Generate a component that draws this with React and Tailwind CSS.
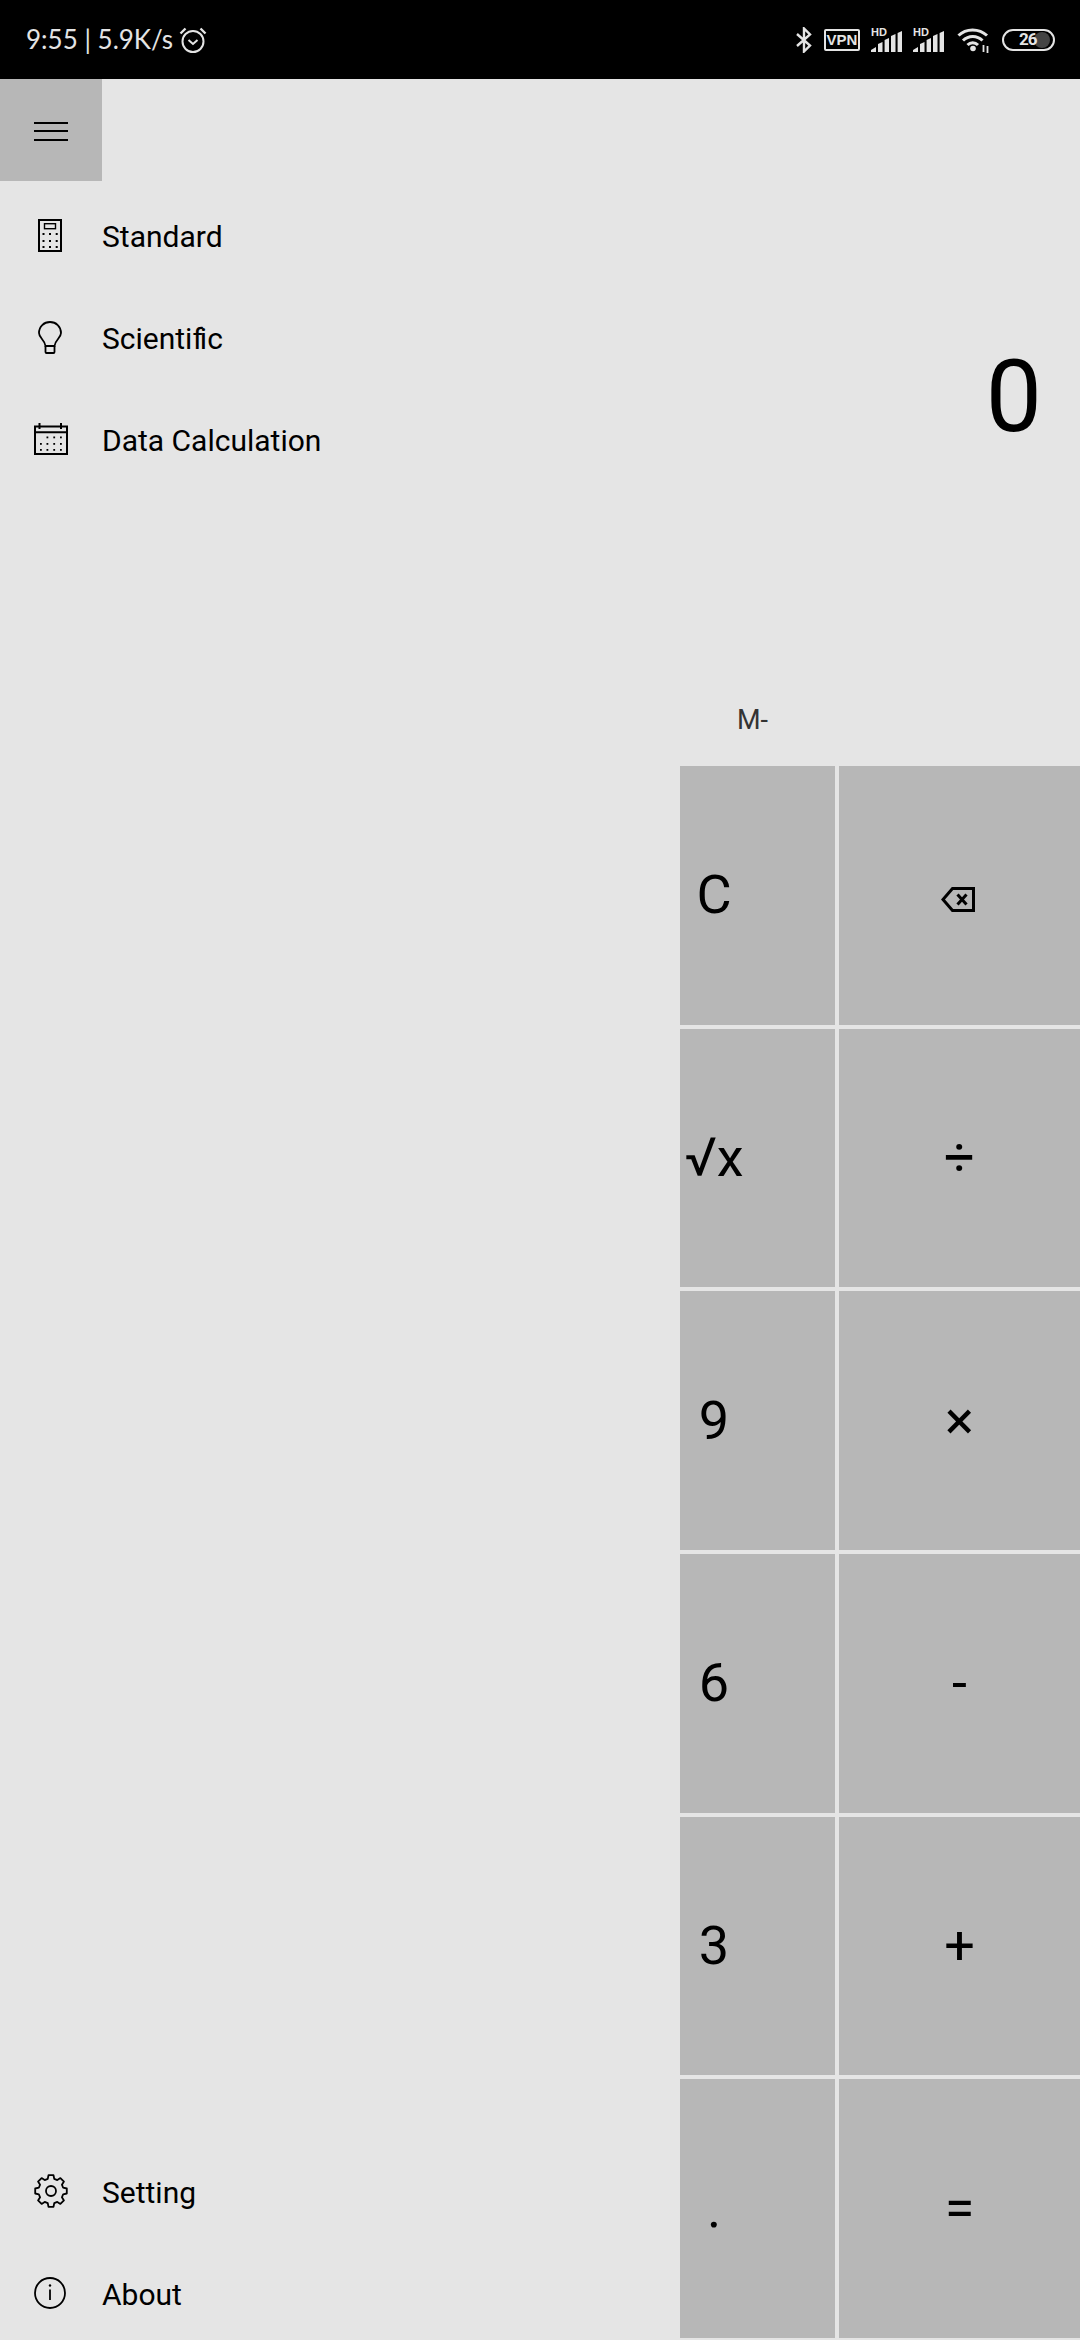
function gearPath() {
  const pts = [];
  const cx = 17;
  const cy = 17;
  for (let i = 0; i < 8; i++) {
    const a = -90 + i * 45;
    const list = [[a - 15, 12.6], [a - 9, 16], [a + 9, 16], [a + 15, 12.6]];
    for (const [deg, r] of list) {
      const t = (deg * Math.PI) / 180;
      pts.push(`${(cx + r * Math.cos(t)).toFixed(2)} ${(cy + r * Math.sin(t)).toFixed(2)}`);
    }
  }
  return `M${pts.join('L')}Z`;
}

function Signal({ className }) {
  return (
    <div className={`relative w-[31px] h-[24px] ${className}`}>
      <span className="absolute left-0 -top-[1px] text-[11px] leading-none font-bold font-['Liberation_Sans',sans-serif]">HD</span>
      <svg width="31" height="21" viewBox="0 0 31 21" fill="currentColor" className="absolute left-0 bottom-0">
        <path d="M0 21 0 19 5 16V21ZM7 21V13L11.5 11V21ZM13.6 21V9L18 7V21ZM20 21V5L24.5 3V21ZM26.6 21V2L31 0V21Z" />
      </svg>
    </div>
  );
}

function StatusBar() {
  return (
    <div className="h-[79px] bg-black flex items-center justify-between pl-[26px] pr-[25px] text-[#e4e4e4] shrink-0">
      <div className="flex items-center">
        <span className="text-[26px] leading-none font-['Lato',sans-serif] -mt-[2px]">9:55 | 5.9K/s</span>
        <svg width="28" height="28" viewBox="0 0 28 28" fill="none" stroke="currentColor" strokeWidth="2" className="ml-[6px]">
          <circle cx="14" cy="15.5" r="10.5" />
          <path d="M9.5 14 14 18 18.5 14" />
          <path d="M1.5 7.5 6.5 2.5M26.5 7.5 21.5 2.5" strokeWidth="2.4" />
        </svg>
      </div>
      <div className="flex items-center">
        <svg width="16" height="26" viewBox="0 0 16 26" fill="none" stroke="currentColor" strokeWidth="2.4">
          <path d="M1 7 14 18.5 8 24.5V1.5L14 7.5 1 19" />
        </svg>
        <div className="ml-[12px] w-[36px] h-[22px] border-2 border-current rounded-[2px] text-[15px] leading-none font-bold flex items-center justify-center font-['Liberation_Sans',sans-serif]">VPN</div>
        <Signal className="ml-[11px]" />
        <Signal className="ml-[11px]" />
        <svg width="33" height="26" viewBox="0 0 33 26" fill="none" stroke="currentColor" strokeWidth="3" className="ml-[13px]">
          <path d="M1.5 8.5C9 1 22 1 30 8.5" />
          <path d="M6 13.5C11.5 8 20 8 25.5 13.5" />
          <path d="M10.5 18C13.5 15 18 15 21 18" />
          <circle cx="16" cy="21.5" r="2.8" fill="currentColor" stroke="none" />
          <path d="M26.5 18V25M30.5 19V26" strokeWidth="1.8" />
        </svg>
        <div className="ml-[12px] w-[53px] h-[22px] rounded-full border-2 border-current relative flex items-center pl-[15px] overflow-hidden">
          <span className="absolute right-[3px] top-[1px] w-[16px] h-[16px] rounded-full bg-[#444]" />
          <span className="relative text-[17px] leading-none font-bold font-['Roboto',sans-serif] tracking-[-1px]">26</span>
        </div>
      </div>
    </div>
  );
}

function NavItem({ icon, children }) {
  return (
    <div className="h-[102px] flex items-center shrink-0">
      <div className="w-[102px] flex justify-center shrink-0 text-black">{icon}</div>
      <span className="text-[30px] leading-none text-black mt-[3px]">{children}</span>
    </div>
  );
}

const CalcIcon = (
  <svg width="24" height="33" viewBox="0 0 24 33" fill="none" stroke="black" className="-ml-[2px]">
    <rect x="1" y="1" width="22" height="31" strokeWidth="2" />
    <rect x="6.5" y="4.7" width="11" height="5" strokeWidth="1.4" />
    <g fill="black" stroke="none">
      {[14, 21, 27].flatMap((y) => [4.5, 11, 17.7].map((x) => <rect key={`${x}-${y}`} x={x} y={y} width="2" height="2" />))}
    </g>
  </svg>
);
const BulbIcon = (
  <svg width="24" height="33" viewBox="0 0 24 33" fill="none" stroke="black" strokeWidth="1.8" className="-ml-[2px]">
    <path d="M7.5 25C7 19 1 17 1 12C1 5.5 6 1 12 1C18 1 23 5.5 23 12C23 17 17 19 16.5 25Z" />
    <path d="M7.5 25V31Q7.5 32 8.5 32H15.5Q16.5 32 16.5 31V25" />
  </svg>
);
const CalIcon = (
  <svg width="34" height="32" viewBox="0 0 34 32" fill="none" stroke="black" strokeWidth="2">
    <rect x="1" y="3.5" width="32" height="27.5" />
    <path d="M1 9.2H33M5.5 0V6M27 0V6" />
    <g fill="black" stroke="none">
      {[13.5, 20, 26].flatMap((y) => [6, 12.5, 19.3, 26].filter((x) => !(y === 13.5 && x === 6)).map((x) => <rect key={`${x}-${y}`} x={x} y={y} width="1.8" height="1.8" />))}
    </g>
  </svg>
);
const GearIcon = (
  <svg width="34" height="34" viewBox="0 0 34 34" fill="none" stroke="black" strokeWidth="1.8">
    <circle cx="17" cy="17" r="5" />
    <path d={gearPath()} strokeLinejoin="round" />
  </svg>
);
const InfoIcon = (
  <svg width="32" height="32" viewBox="0 0 32 32" fill="none" stroke="black" strokeWidth="1.8" className="-ml-[2px]">
    <circle cx="16" cy="16" r="15" />
    <path d="M16 12.5V23" />
    <circle cx="16" cy="8.5" r="1.2" fill="black" stroke="none" />
  </svg>
);

function Key({ children, left }) {
  return (
    <div className={`bg-[#b7b7b7] flex items-center justify-center text-black text-[54px] leading-none ${left ? 'pr-[87px]' : ''}`}>
      {children}
    </div>
  );
}

const BackspaceIcon = (
  <svg width="34" height="25" viewBox="0 0 34 25" fill="none" stroke="black" strokeWidth="3" className="mt-[9px] -ml-[3px]">
    <path d="M32.5 1.5V23.5H11.5L2 12.5 11.5 1.5Z" />
    <path d="M16.5 7.5 25.5 17.5M25.5 7.5 16.5 17.5" />
  </svg>
);

const keys = [
  ['C', BackspaceIcon],
  ['√x', '÷'],
  ['9', '×'],
  ['6', '-'],
  ['3', '+'],
  ['.', '='],
];

export default function App() {
  return (
    <div className="w-[1080px] h-[2340px] overflow-hidden bg-[#e5e5e5] flex flex-col font-['Roboto',sans-serif]">
      <StatusBar />
      <div className="flex-1 flex min-h-0">
        <div className="w-[680px] flex flex-col shrink-0 h-[2265px]">
          <div className="w-[102px] h-[102px] bg-[#b7b7b7] flex flex-col items-center justify-center gap-[6.5px] pt-[2px] shrink-0">
            <span className="w-[34px] h-[2px] bg-black" />
            <span className="w-[34px] h-[2px] bg-black" />
            <span className="w-[34px] h-[2px] bg-black" />
          </div>
          <div className="mt-[3px] flex flex-col">
            <NavItem icon={CalcIcon}>Standard</NavItem>
            <NavItem icon={BulbIcon}>Scienti<span className="tracking-[-3px]">f</span>ic</NavItem>
            <NavItem icon={CalIcon}>Data Calculation</NavItem>
          </div>
          <div className="flex-1" />
          <NavItem icon={GearIcon}>Setting</NavItem>
          <NavItem icon={InfoIcon}>About</NavItem>
        </div>
        <div className="flex-1 flex flex-col min-w-0">
          <div className="h-[687px] shrink-0 flex flex-col pt-[268px]">
            <div className="self-end pr-[38px] text-[100px] leading-none text-black">0</div>
            <div className="mt-[260px] pl-[57px] text-[27px] leading-none text-[#333]">M-</div>
          </div>
          <div className="grid grid-cols-[155px_241px] auto-rows-[258.67px] gap-[4px]">
            {keys.flatMap(([a, b], i) => [
              <Key key={`l${i}`} left>{a}</Key>,
              <Key key={`r${i}`}>{b}</Key>,
            ])}
          </div>
        </div>
      </div>
    </div>
  );
}
